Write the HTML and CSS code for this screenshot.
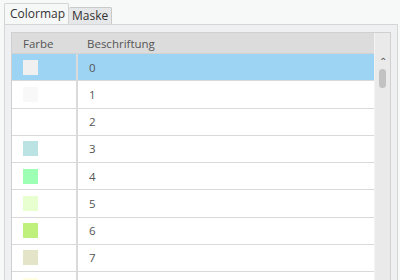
FILE: index.html
```html
<!DOCTYPE html>
<html lang="de">
<head>
    <meta charset="UTF-8">
    <title>Colormap</title>
    <link rel="stylesheet" href="styles.css">
</head>
<body>
    <div class="tabs">
        <div class="tab active">Colormap</div>
        <div class="tab">Maske</div>
    </div>

    <div class="panel">
        <div class="grid">
            <div class="table">
                <div class="row head">
                    <div class="cell c1">Farbe</div>
                    <div class="cell c2">Beschriftung</div>
                </div>
                <div class="row selected">
                    <div class="cell c1"><span class="swatch" style="background:#f0f0f0"></span></div>
                    <div class="cell c2">0</div>
                </div>
                <div class="row">
                    <div class="cell c1"><span class="swatch" style="background:#f8f8f8"></span></div>
                    <div class="cell c2">1</div>
                </div>
                <div class="row">
                    <div class="cell c1"><span class="swatch" style="background:#ffffff"></span></div>
                    <div class="cell c2">2</div>
                </div>
                <div class="row">
                    <div class="cell c1"><span class="swatch" style="background:#bce3e4"></span></div>
                    <div class="cell c2">3</div>
                </div>
                <div class="row">
                    <div class="cell c1"><span class="swatch" style="background:#9cffb4"></span></div>
                    <div class="cell c2">4</div>
                </div>
                <div class="row">
                    <div class="cell c1"><span class="swatch" style="background:#e8ffd0"></span></div>
                    <div class="cell c2">5</div>
                </div>
                <div class="row">
                    <div class="cell c1"><span class="swatch" style="background:#c0f07c"></span></div>
                    <div class="cell c2">6</div>
                </div>
                <div class="row">
                    <div class="cell c1"><span class="swatch" style="background:#e4e4c9"></span></div>
                    <div class="cell c2">7</div>
                </div>
                <div class="row last">
                    <div class="cell c1"><span class="swatch" style="background:#ffffe0"></span></div>
                    <div class="cell c2"></div>
                </div>
            </div>
            <div class="scrollbar">
                <div class="arrow">&#8963;</div>
                <div class="thumb"></div>
            </div>
        </div>
    </div>
</body>
</html>
```

FILE: styles.css
```css
body {
    margin: 0;
    padding: 4px 0 0 4px;
    height: 280px;
    box-sizing: border-box;
    overflow: hidden;
    background-color: #f7f8f8;
    font-family: "Open Sans", "Noto Sans", sans-serif;
    font-size: 12px;
    color: #333;
}

/* Abas */
.tabs {
    display: flex;
    align-items: flex-end;
    height: 20px;
    position: relative;
    z-index: 1;
}

.tab {
    height: 16px;
    line-height: 15px;
    padding: 0 3px;
    background-color: #e6e7e8;
    border: 1px solid #c9c9c9;
    border-bottom: none;
    border-left: none;
    border-radius: 2px 2px 0 0;
}

.tab.active {
    height: 20px;
    line-height: 19px;
    width: 53px;
    padding: 0 5px;
    background-color: #f6f7f7;
    border-left: 1px solid #d4d4d4;
    border-color: #d4d4d4;
}

.panel {
    margin-right: 2px;
    height: 260px;
    padding: 7px 6px 0 6px;
    background-color: #eff0f1;
    border: 1px solid #d6d6d6;
    border-bottom: none;
}

.grid {
    display: flex;
    height: 100%;
    border: 1px solid #d0d0d0;
    border-bottom: none;
    background-color: #fff;
}

.table {
    flex: 1;
    color: #555;
    font-size: 11.5px;
}

.row {
    display: flex;
    height: 27.25px;
    box-sizing: border-box;
    border-bottom: 1px solid #d9d9d9;
}

.row.head {
    height: 21px;
    background-color: #dcdcdc;
    border-bottom: 1px solid #d2d2d2;
}

.row.selected {
    background-color: #9dd4f3;
}

.cell {
    display: flex;
    align-items: center;
    padding-left: 11px;
}

.c1 {
    width: 53px;
    border-right: 2px solid #dadada;
}

.row.head .c1 {
    border-right: none;
}

.c2 {
    flex: 1;
}

.swatch {
    width: 15px;
    height: 15px;
}

.scrollbar {
    width: 15px;
    background-color: #eaeaea;
    border-left: 1px solid #f3f3f3;
}

.arrow {
    margin-top: 23px;
    text-align: center;
    font-size: 10px;
    line-height: 10px;
    color: #555;
}

.thumb {
    width: 7px;
    height: 19px;
    margin: 3px auto 0;
    background-color: #c2c2c2;
    border-radius: 4px;
}
```
